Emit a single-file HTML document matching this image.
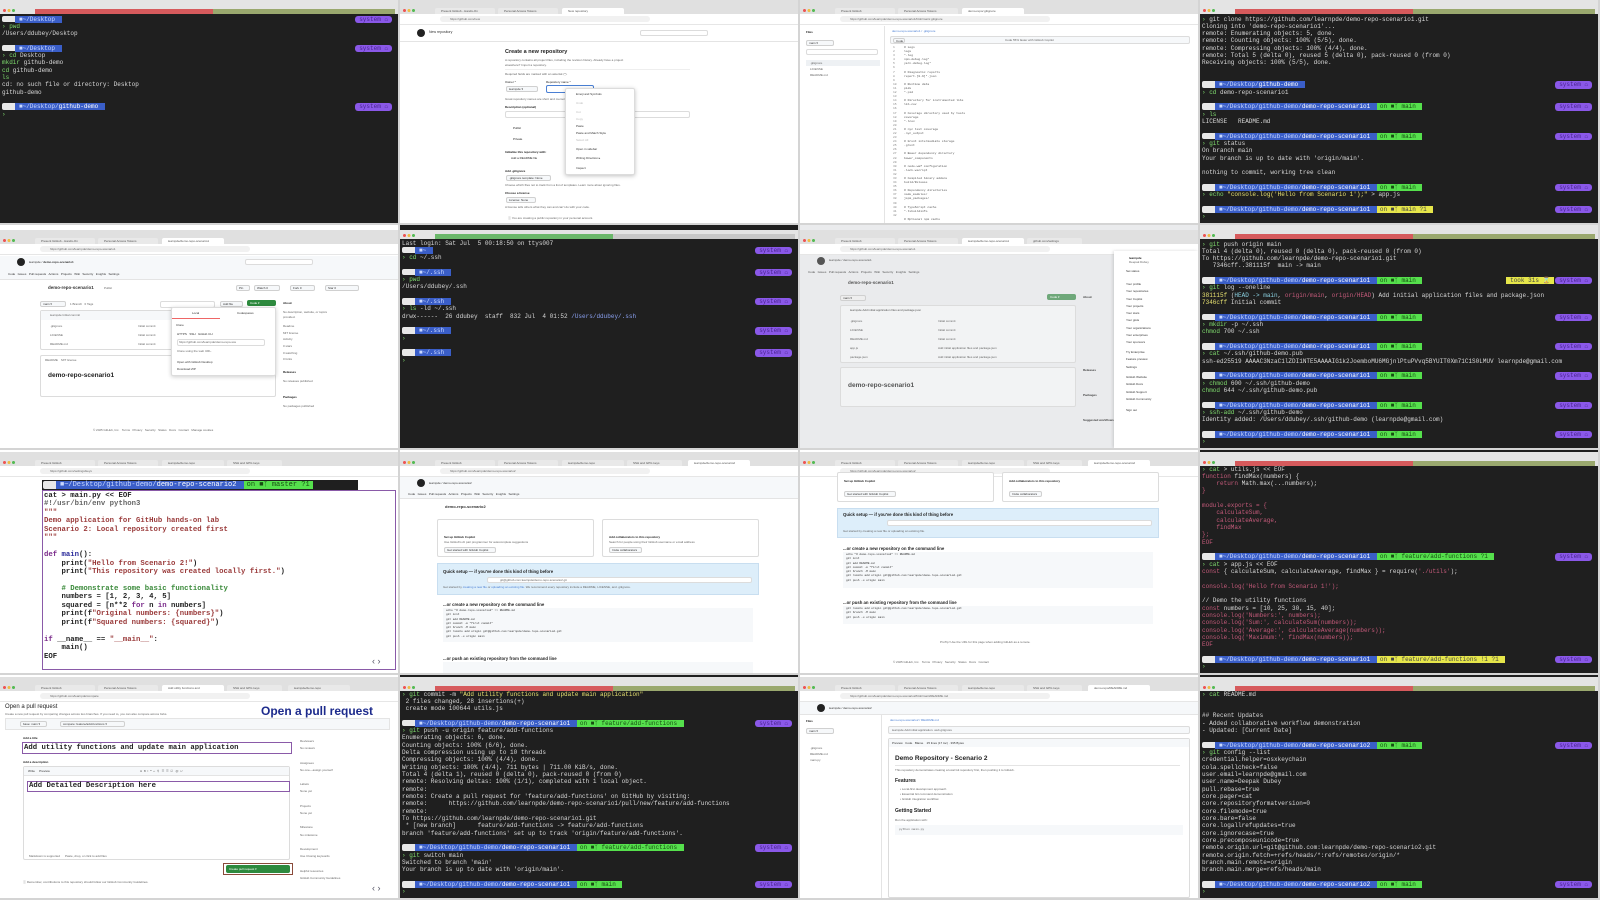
<!DOCTYPE html>
<html><head><meta charset="utf-8"><style>
*{margin:0;padding:0;box-sizing:border-box}
html,body{width:1600px;height:900px}
body{background:#d4d4d4;position:relative;overflow:hidden;font-family:"Liberation Sans",sans-serif}
.tile{position:absolute;width:398px;height:223px;overflow:hidden}
.term{background:#1f1f1f}
.tb{position:absolute;left:0;top:0;width:100%;height:14px;background:#e4e4e4}
.tb .r{position:absolute;left:35px;top:9px;width:178px;height:5px;background:#d65a5c}
.tb .g{position:absolute;left:213px;top:9px;width:182px;height:5px;background:#9aa86e}
.dots{position:absolute;left:3px;top:9px;width:12px;height:3px;background:radial-gradient(circle at 1.5px 1.5px,#e55 1.4px,transparent 1.6px),radial-gradient(circle at 6px 1.5px,#eb4 1.4px,transparent 1.6px),radial-gradient(circle at 10.5px 1.5px,#5b5 1.4px,transparent 1.6px)}
.tx{position:absolute;left:2px;top:15.5px;right:0;font:6px/7.33px "Liberation Mono",monospace;color:#d8d8d8}
.tx div{height:7.33px;position:relative;white-space:pre;overflow:visible}
.ap{display:inline-block;background:#e8e8e8;color:#111;width:13px;height:6.5px;vertical-align:top;border-radius:2px 0 0 2px}
.pb{background:#3a5ec8;color:#c9d8ff;padding:0 3px 0 4px}
.pb b{color:#fff;font-weight:normal}
.pg{background:#55e04c;color:#174d12;padding:0 3px}
.py{background:#e6e64a;color:#444;padding:0 3px}
.ps{position:absolute;right:6px;top:0;background:#8a58e8;color:#4a2590;padding:0 4px;border-radius:3px}
.tk{position:absolute;right:44px;top:0;background:#e6e64a;color:#444;padding:0 4px}
.gr{color:#7fdc6e}.rd{color:#c45a7a}.cy{color:#8ad0e0}.ylw{color:#e6e070}
.brow{background:#fff}
.bt{position:absolute;left:0;top:0;width:100%;height:14px;background:#e0e0e0}
.tab{position:absolute;top:8px;height:6px;background:#e9e9e9;border-radius:2px 2px 0 0;font-size:3px;line-height:6px;color:#555;padding-left:6px;overflow:hidden;white-space:nowrap}
.tab.a{background:#fff}
.ab{position:absolute;left:0;top:14px;width:100%;height:11px;background:#fff;border-bottom:1px solid #e6e6e6}
.url{position:absolute;left:40px;top:2px;width:210px;height:6px;background:#f1f1f1;border-radius:3px;font-size:3px;line-height:6px;padding-left:10px;color:#666;overflow:hidden;white-space:nowrap}
.s{position:absolute;font-size:3px;color:#666;white-space:nowrap;line-height:4px}
.m{position:absolute;white-space:nowrap}
.box{position:absolute;border:1px solid #dcdcdc;border-radius:2px;background:#fff}
.gh{position:absolute;width:8px;height:8px;border-radius:50%;background:#222}
.btn{position:absolute;height:6px;border:1px solid #d0d0d0;border-radius:2px;background:#f6f8fa;font-size:3px;line-height:5px;padding:0 2px;color:#333;white-space:nowrap;overflow:hidden}
.ln{position:absolute;height:1.5px;background:#c8c8c8}
</style></head><body>

<!-- R1C1 terminal -->
<div class="tile term" style="left:0;top:0"><div class="tb"><div class="dots"></div><div class="r"></div><div class="g"></div></div><div class="tx"><div><span class="ap"></span><span class="pb">&#9632;~/Desktop </span><span class="ps">system &#8962;</span></div><div><span class="gr">› pwd</span></div><div>/Users/ddubey/Desktop</div><div></div><div><span class="ap"></span><span class="pb">&#9632;~/Desktop </span><span class="ps">system &#8962;</span></div><div><span class="gr">› cd</span> Desktop</div><div><span class="gr">mkdir</span> github-demo</div><div><span class="gr">cd</span> github-demo</div><div><span class="gr">ls</span></div><div>cd: no such file or directory: Desktop</div><div>github-demo</div><div></div><div><span class="ap"></span><span class="pb">&#9632;~/Desktop/<b>github-demo</b> </span><span class="ps">system &#8962;</span></div><div><span class="gr">›</span></div></div></div>

<!-- R1C2 new repo -->
<div class="tile brow" style="left:400px;top:0">
<div class="bt"><div class="dots"></div><div class="tab" style="left:35px;width:60px">Present GitHub - Hands-On</div><div class="tab" style="left:98px;width:60px">Personal Access Tokens</div><div class="tab a" style="left:162px;width:62px">New repository</div></div>
<div class="ab"><div class="url">https://github.com/new</div></div>
<div style="position:absolute;left:0;top:26px;width:100%;height:16px;border-bottom:1px solid #e4e4e4"></div>
<div class="gh" style="left:17px;top:29px"></div><div class="m" style="left:29px;top:30px;font-size:3.5px;color:#333">New repository</div>
<div class="box" style="left:240px;top:30px;width:68px;height:6px"></div>
<div class="m" style="left:105px;top:49px;font-size:5.5px;font-weight:bold;color:#222">Create a new repository</div>
<div class="s" style="left:105px;top:58px">A repository contains all project files, including the revision history. Already have a project</div>
<div class="s" style="left:105px;top:63px">elsewhere? Import a repository.</div>
<div class="ln" style="left:105px;top:69px;width:185px;background:#eee;height:1px"></div>
<div class="s" style="left:105px;top:72px">Required fields are marked with an asterisk (*).</div>
<div class="s" style="left:105px;top:80px;color:#222">Owner *</div><div class="s" style="left:146px;top:80px;color:#222">Repository name *</div>
<div class="btn" style="left:106px;top:86px;width:32px">learnpde ▾</div><div class="box" style="left:146px;top:85px;width:48px;height:8px;border-color:#4a7fd4"></div>
<div class="s" style="left:105px;top:97px">Great repository names are short and memorable. Need inspiration? How about</div>
<div class="s" style="left:105px;top:105px;color:#222;font-weight:bold">Description (optional)</div>
<div class="box" style="left:105px;top:111px;width:185px;height:7px"></div>
<div class="s" style="left:113px;top:126px;color:#222">Public</div><div class="s" style="left:113px;top:137px;color:#222">Private</div>
<div class="s" style="left:105px;top:150px;color:#222;font-weight:bold">Initialize this repository with:</div>
<div class="s" style="left:111px;top:156px;color:#222">Add a README file</div>
<div class="s" style="left:105px;top:169px;color:#222;font-weight:bold">Add .gitignore</div>
<div class="btn" style="left:106px;top:175px;width:45px">.gitignore template: None</div>
<div class="s" style="left:105px;top:183px">Choose which files not to track from a list of templates. Learn more about ignoring files.</div>
<div class="s" style="left:105px;top:191px;color:#222;font-weight:bold">Choose a license</div>
<div class="btn" style="left:106px;top:197px;width:30px">License: None</div>
<div class="s" style="left:105px;top:205px">A license tells others what they can and can't do with your code.</div>
<div class="s" style="left:108px;top:216px">ⓘ You are creating a public repository in your personal account.</div>
<div class="box" style="left:165px;top:88px;width:70px;height:87px;box-shadow:0 1px 4px rgba(0,0,0,.25)">
<div class="s" style="left:10px;top:3px;color:#333">Emoji and Symbols</div>
<div class="s" style="left:10px;top:12px;color:#bbb">Undo</div><div class="s" style="left:10px;top:21px;color:#bbb">Cut</div><div class="s" style="left:10px;top:28px;color:#bbb">Copy</div>
<div class="s" style="left:10px;top:35px;color:#333">Paste</div><div class="s" style="left:10px;top:42px;color:#333">Paste and Match Style</div><div class="s" style="left:10px;top:49px;color:#bbb">Select All</div>
<div class="s" style="left:10px;top:58px;color:#333">Open in sidebar</div><div class="s" style="left:10px;top:67px;color:#333">Writing Direction ▸</div><div class="s" style="left:10px;top:77px;color:#333">Inspect</div></div>
</div>

<!-- R1C3 gitignore code -->
<div class="tile brow" style="left:800px;top:0">
<div class="bt"><div class="dots"></div><div class="tab" style="left:35px;width:60px">Present GitHub</div><div class="tab" style="left:98px;width:60px">Personal Access Tokens</div><div class="tab a" style="left:162px;width:62px">demo-repo/.gitignore</div></div>
<div class="ab"><div class="url">https://github.com/learnpde/demo-repo-scenario1/blob/main/.gitignore</div></div>
<div style="position:absolute;left:0;top:26px;width:85px;height:197px;border-right:1px solid #e4e4e4"></div>
<div class="s" style="left:6px;top:30px;color:#222;font-weight:bold">Files</div>
<div class="btn" style="left:6px;top:40px;width:28px">main ▾</div>
<div class="box" style="left:6px;top:49px;width:72px;height:6px"></div>
<div style="position:absolute;left:6px;top:60px;width:74px;height:6px;background:#eef1f4"></div>
<div class="s" style="left:10px;top:61px">.gitignore</div><div class="s" style="left:10px;top:67px">LICENSE</div><div class="s" style="left:10px;top:73px">README.md</div>
<div class="s" style="left:92px;top:29px;color:#4a7fd4">demo-repo-scenario1 / .gitignore</div>
<div class="box" style="left:90px;top:36px;width:300px;height:8px;background:#f6f8fa"></div>
<div class="btn" style="left:93px;top:38px;height:5px;width:12px">Code</div>
<div class="s" style="left:205px;top:38px">Code 55% faster with GitHub Copilot</div>
<div class="m" style="left:93px;top:46px;font:3px/4.1px 'Liberation Mono',monospace;color:#888">1<br>2<br>3<br>4<br>5<br>6<br>7<br>8<br>9<br>10<br>11<br>12<br>13<br>14<br>15<br>16<br>17<br>18<br>19<br>20<br>21<br>22<br>23<br>24<br>25<br>26<br>27<br>28<br>29<br>30<br>31<br>32<br>33<br>34<br>35<br>36<br>37<br>38<br>39<br>40<br>41<br>42</div>
<div class="m" style="left:104px;top:46px;font:3px/4.1px 'Liberation Mono',monospace;color:#555"># Logs<br>logs<br>*.log<br>npm-debug.log*<br>yarn-debug.log*<br><br># Diagnostic reports<br>report.[0-9]*.json<br><br># Runtime data<br>pids<br>*.pid<br><br># Directory for instrumented libs<br>lib-cov<br><br># Coverage directory used by tools<br>coverage<br>*.lcov<br><br># nyc test coverage<br>.nyc_output<br><br># Grunt intermediate storage<br>.grunt<br><br># Bower dependency directory<br>bower_components<br><br># node-waf configuration<br>.lock-wscript<br><br># Compiled binary addons<br>build/Release<br><br># Dependency directories<br>node_modules/<br>jspm_packages/<br><br># TypeScript cache<br>*.tsbuildinfo<br><br># Optional npm cache</div>
</div>

<!-- R1C4 terminal -->
<div class="tile term" style="left:1200px;top:0"><div class="tb"><div class="dots"></div><div class="r"></div><div class="g"></div></div><div class="tx"><div><span class="gr">›</span> git clone https://github.com/learnpde/demo-repo-scenario1.git</div><div>Cloning into 'demo-repo-scenario1'...</div><div>remote: Enumerating objects: 5, done.</div><div>remote: Counting objects: 100% (5/5), done.</div><div>remote: Compressing objects: 100% (4/4), done.</div><div>remote: Total 5 (delta 0), reused 5 (delta 0), pack-reused 0 (from 0)</div><div>Receiving objects: 100% (5/5), done.</div><div></div><div></div><div><span class="ap"></span><span class="pb">&#9632;~/Desktop/<b>github-demo</b> </span><span class="ps">system &#8962;</span></div><div><span class="gr">› cd</span> demo-repo-scenario1</div><div></div><div><span class="ap"></span><span class="pb">&#9632;~/Desktop/github-demo/<b>demo-repo-scenario1</b> </span><span class="pg">on &#9632;&#5833; main </span><span class="ps">system &#8962;</span></div><div><span class="gr">› ls</span></div><div>LICENSE   README.md</div><div></div><div><span class="ap"></span><span class="pb">&#9632;~/Desktop/github-demo/<b>demo-repo-scenario1</b> </span><span class="pg">on &#9632;&#5833; main </span><span class="ps">system &#8962;</span></div><div><span class="gr">› git</span> status</div><div>On branch main</div><div>Your branch is up to date with 'origin/main'.</div><div></div><div>nothing to commit, working tree clean</div><div></div><div><span class="ap"></span><span class="pb">&#9632;~/Desktop/github-demo/<b>demo-repo-scenario1</b> </span><span class="pg">on &#9632;&#5833; main </span><span class="ps">system &#8962;</span></div><div><span class="gr">› echo</span> <span class="ylw">"console.log('Hello from Scenario 1');"</span> &gt; app.js</div><div></div><div><span class="ap"></span><span class="pb">&#9632;~/Desktop/github-demo/<b>demo-repo-scenario1</b> </span><span class="py">on &#9632;&#5833; main ?1 </span><span class="ps">system &#8962;</span></div><div><span class="gr">›</span></div></div></div>

<!-- R2C1 repo page -->
<div class="tile brow" style="left:0;top:225px">
<div class="bt" style="top:5px;height:14px"><div class="dots"></div><div class="tab" style="left:35px;width:60px">Present GitHub - Hands-On</div><div class="tab" style="left:98px;width:60px">Personal Access Tokens</div><div class="tab a" style="left:162px;width:62px">learnpde/demo-repo-scenario1</div></div>
<div class="ab" style="top:19px"><div class="url">https://github.com/learnpde/demo-repo-scenario1</div></div>
<div style="position:absolute;left:0;top:31px;width:100%;height:24px;background:#f6f8fa;border-bottom:1px solid #e4e4e4"></div>
<div class="gh" style="left:17px;top:33px"></div><div class="s" style="left:29px;top:35px;color:#333">learnpde / <b>demo-repo-scenario1</b></div>
<div class="box" style="left:245px;top:34px;width:68px;height:6px"></div>
<div class="s" style="left:8px;top:47px;color:#333">Code &nbsp; Issues &nbsp; Pull requests &nbsp; Actions &nbsp; Projects &nbsp; Wiki &nbsp; Security &nbsp; Insights &nbsp; Settings</div>
<div class="m" style="left:48px;top:60px;font-size:4.5px;font-weight:bold;color:#333">demo-repo-scenario1</div><div class="s" style="left:104px;top:61px">Public</div>
<div class="btn" style="left:236px;top:60px;width:14px">Pin</div><div class="btn" style="left:254px;top:60px;width:26px">Watch 0</div><div class="btn" style="left:290px;top:60px;width:25px">Fork 0</div><div class="btn" style="left:325px;top:60px;width:34px">Star 0</div>
<div class="btn" style="left:40px;top:76px;width:26px">main ▾</div><div class="s" style="left:70px;top:77px">1 Branch &nbsp; 0 Tags</div>
<div class="box" style="left:160px;top:76px;width:55px;height:7px"></div><div class="btn" style="left:220px;top:76px;width:23px">Add file</div>
<div class="btn" style="left:247px;top:75px;width:29px;background:#2d8a3e;color:#fff;border-color:#2d8a3e">Code ▾</div>
<div class="box" style="left:40px;top:85px;width:236px;height:40px"></div>
<div style="position:absolute;left:41px;top:86px;width:234px;height:9px;background:#f6f8fa"></div>
<div class="s" style="left:50px;top:88px">learnpde Initial commit</div>
<div class="s" style="left:50px;top:99px">.gitignore</div><div class="s" style="left:138px;top:99px">Initial commit</div>
<div class="s" style="left:50px;top:108px">LICENSE</div><div class="s" style="left:138px;top:108px">Initial commit</div>
<div class="s" style="left:50px;top:117px">README.md</div><div class="s" style="left:138px;top:117px">Initial commit</div>
<div class="box" style="left:40px;top:130px;width:236px;height:42px"></div>
<div class="s" style="left:45px;top:133px">README &nbsp;&nbsp; MIT license</div>
<div class="m" style="left:48px;top:147px;font-size:6.5px;font-weight:bold;color:#222">demo-repo-scenario1</div>
<div class="box" style="left:171px;top:82px;width:105px;height:69px;box-shadow:0 1px 4px rgba(0,0,0,.2)">
<div class="s" style="left:20px;top:3px;color:#333">Local</div><div class="s" style="left:65px;top:3px;color:#333">Codespaces</div>
<div class="ln" style="left:0;top:10px;width:48px;height:1px;background:#e66"></div>
<div class="s" style="left:4px;top:15px;color:#333">Clone</div>
<div class="s" style="left:5px;top:24px;color:#333">HTTPS &nbsp; SSH &nbsp; GitHub CLI</div>
<div class="box" style="left:5px;top:31px;width:88px;height:7px"></div>
<div class="s" style="left:7px;top:32px">https://github.com/learnpde/demo-repo-sce</div>
<div class="s" style="left:5px;top:41px">Clone using the web URL.</div>
<div class="s" style="left:5px;top:52px;color:#333">Open with GitHub Desktop</div>
<div class="s" style="left:5px;top:59px;color:#333">Download ZIP</div></div>
<div class="s" style="left:283px;top:76px;color:#222;font-weight:bold">About</div>
<div class="s" style="left:283px;top:85px">No description, website, or topics</div><div class="s" style="left:283px;top:90px">provided.</div>
<div class="s" style="left:283px;top:99px">Readme</div><div class="s" style="left:283px;top:106px">MIT license</div><div class="s" style="left:283px;top:112px">Activity</div><div class="s" style="left:283px;top:119px">0 stars</div><div class="s" style="left:283px;top:126px">0 watching</div><div class="s" style="left:283px;top:132px">0 forks</div>
<div class="s" style="left:283px;top:145px;color:#222;font-weight:bold">Releases</div><div class="s" style="left:283px;top:154px">No releases published</div>
<div class="s" style="left:283px;top:170px;color:#222;font-weight:bold">Packages</div><div class="s" style="left:283px;top:179px">No packages published</div>
<div class="s" style="left:93px;top:203px">© 2025 GitHub, Inc. &nbsp; Terms &nbsp; Privacy &nbsp; Security &nbsp; Status &nbsp; Docs &nbsp; Contact &nbsp; Manage cookies</div>
</div>

<!-- R2C2 terminal -->
<div class="tile term" style="left:400px;top:225px"><div class="tb" style="top:5px;height:9px"><div class="dots" style="top:4px"></div><div class="r" style="background:#6bb86a;top:4px"></div><div class="g" style="background:#c8c8c8;top:4px"></div></div><div class="tx" style="top:14.5px"><div>Last login: Sat Jul  5 00:18:50 on ttys007</div><div><span class="ap"></span><span class="pb">&#9632;~ </span><span class="ps">system &#8962;</span></div><div><span class="gr">› cd</span> ~/.ssh</div><div></div><div><span class="ap"></span><span class="pb">&#9632;~/.ssh </span><span class="ps">system &#8962;</span></div><div><span class="gr">› pwd</span></div><div>/Users/ddubey/.ssh</div><div></div><div><span class="ap"></span><span class="pb">&#9632;~/.ssh </span><span class="ps">system &#8962;</span></div><div><span class="gr">› ls</span> -ld ~/.ssh</div><div>drwx------  26 ddubey  staff  832 Jul  4 01:52 <span style="color:#8aa0f0">/Users/ddubey/.ssh</span></div><div></div><div><span class="ap"></span><span class="pb">&#9632;~/.ssh </span><span class="ps">system &#8962;</span></div><div><span class="gr">›</span></div><div></div><div><span class="ap"></span><span class="pb">&#9632;~/.ssh </span><span class="ps">system &#8962;</span></div><div><span class="gr">›</span></div></div></div>

<!-- R2C3 repo page with menu -->
<div class="tile brow" style="left:800px;top:225px;background:#eaebed">
<div class="bt" style="top:5px"><div class="dots"></div><div class="tab" style="left:35px;width:60px">Present GitHub</div><div class="tab" style="left:98px;width:60px">Personal Access Tokens</div><div class="tab a" style="left:162px;width:62px">learnpde/demo-repo-scenario1</div><div class="tab" style="left:227px;width:55px">github.com/settings</div></div>
<div class="ab" style="top:19px"><div class="url">https://github.com/learnpde/demo-repo-scenario1</div></div>
<div class="gh" style="left:17px;top:32px;background:#555"></div><div class="s" style="left:29px;top:33px;color:#555">learnpde / demo-repo-scenario1</div>
<div class="s" style="left:8px;top:45px;color:#555">Code &nbsp; Issues &nbsp; Pull requests &nbsp; Actions &nbsp; Projects &nbsp; Wiki &nbsp; Security &nbsp; Insights &nbsp; Settings</div>
<div class="m" style="left:48px;top:55px;font-size:4.5px;font-weight:bold;color:#555">demo-repo-scenario1</div>
<div class="btn" style="left:40px;top:70px;width:26px;background:#eee">main ▾</div>
<div class="btn" style="left:247px;top:69px;width:29px;background:#6fa87a;color:#fff;border-color:#6fa87a">Code ▾</div>
<div class="box" style="left:40px;top:80px;width:236px;height:58px;background:#f2f3f4"></div>
<div class="s" style="left:50px;top:83px;color:#555">learnpde Add initial application files and package.json</div>
<div class="s" style="left:50px;top:94px">.gitignore</div><div class="s" style="left:138px;top:94px">Initial commit</div>
<div class="s" style="left:50px;top:103px">LICENSE</div><div class="s" style="left:138px;top:103px">Initial commit</div>
<div class="s" style="left:50px;top:112px">README.md</div><div class="s" style="left:138px;top:112px">Initial commit</div>
<div class="s" style="left:50px;top:121px">app.js</div><div class="s" style="left:138px;top:121px">Add initial application files and package.json</div>
<div class="s" style="left:50px;top:130px">package.json</div><div class="s" style="left:138px;top:130px">Add initial application files and package.json</div>
<div class="box" style="left:40px;top:142px;width:236px;height:40px;background:#f2f3f4"></div>
<div class="m" style="left:48px;top:157px;font-size:6.5px;font-weight:bold;color:#555">demo-repo-scenario1</div>
<div class="s" style="left:283px;top:70px;color:#444;font-weight:bold">About</div>
<div class="s" style="left:283px;top:143px;color:#444;font-weight:bold">Releases</div><div class="s" style="left:283px;top:168px;color:#444;font-weight:bold">Packages</div>
<div class="s" style="left:283px;top:193px;color:#444;font-weight:bold">Suggested workflows</div>
<div style="position:absolute;left:314px;top:26px;width:84px;height:197px;background:#fff;box-shadow:-1px 0 3px rgba(0,0,0,.15)">
<div class="s" style="left:15px;top:5px;color:#222;font-weight:bold">learnpde</div><div class="s" style="left:15px;top:9px">Deepak Dubey</div>
<div class="s" style="left:12px;top:18px;color:#333">Set status</div>
<div class="s" style="left:12px;top:30px;color:#333;line-height:7.3px">Your profile<br>Your repositories<br>Your Copilot<br>Your projects<br>Your stars<br>Your gists<br>Your organizations<br>Your enterprises<br>Your sponsors</div>
<div class="s" style="left:12px;top:98px;color:#333;line-height:7.3px">Try Enterprise<br>Feature preview<br>Settings</div>
<div class="s" style="left:12px;top:123px;color:#333;line-height:7.3px">GitHub Website<br>GitHub Docs<br>GitHub Support<br>GitHub Community</div>
<div class="s" style="left:12px;top:157px;color:#333">Sign out</div></div>
</div>

<!-- R2C4 terminal -->
<div class="tile term" style="left:1200px;top:225px"><div class="tb" style="top:0"><div class="dots"></div><div class="r"></div><div class="g"></div></div><div class="tx" style="top:15.5px"><div><span class="gr">› git</span> push origin main</div><div>Total 4 (delta 0), reused 0 (delta 0), pack-reused 0 (from 0)</div><div>To https://github.com/learnpde/demo-repo-scenario1.git</div><div>   7346cff..381115f  main -&gt; main</div><div></div><div><span class="ap"></span><span class="pb">&#9632;~/Desktop/github-demo/<b>demo-repo-scenario1</b> </span><span class="pg">on &#9632;&#5833; main </span><span class="tk">took 31s &#8987;</span><span class="ps">system &#8962;</span></div><div><span class="gr">› git</span> log --oneline</div><div><span class="ylw">381115f</span> (<span class="cy">HEAD -&gt; main</span>, <span class="rd">origin/main</span>, <span class="rd">origin/HEAD</span>) Add initial application files and package.json</div><div><span class="ylw">7346cff</span> Initial commit</div><div></div><div><span class="ap"></span><span class="pb">&#9632;~/Desktop/github-demo/<b>demo-repo-scenario1</b> </span><span class="pg">on &#9632;&#5833; main </span><span class="ps">system &#8962;</span></div><div><span class="gr">› mkdir</span> -p ~/.ssh</div><div><span class="gr">chmod</span> 700 ~/.ssh</div><div></div><div><span class="ap"></span><span class="pb">&#9632;~/Desktop/github-demo/<b>demo-repo-scenario1</b> </span><span class="pg">on &#9632;&#5833; main </span><span class="ps">system &#8962;</span></div><div><span class="gr">› cat</span> ~/.ssh/github-demo.pub</div><div>ssh-ed25519 AAAAC3NzaC1lZDI1NTE5AAAAIG1k2JoemboMU6MGjnlPtuPVvq5BYUIT0Xm71C1S0LMUV learnpde@gmail.com</div><div></div><div><span class="ap"></span><span class="pb">&#9632;~/Desktop/github-demo/<b>demo-repo-scenario1</b> </span><span class="pg">on &#9632;&#5833; main </span><span class="ps">system &#8962;</span></div><div><span class="gr">› chmod</span> 600 ~/.ssh/github-demo</div><div><span class="gr">chmod</span> 644 ~/.ssh/github-demo.pub</div><div></div><div><span class="ap"></span><span class="pb">&#9632;~/Desktop/github-demo/<b>demo-repo-scenario1</b> </span><span class="pg">on &#9632;&#5833; main </span><span class="ps">system &#8962;</span></div><div><span class="gr">› ssh-add</span> ~/.ssh/github-demo</div><div>Identity added: /Users/ddubey/.ssh/github-demo (learnpde@gmail.com)</div><div></div><div><span class="ap"></span><span class="pb">&#9632;~/Desktop/github-demo/<b>demo-repo-scenario1</b> </span><span class="pg">on &#9632;&#5833; main </span><span class="ps">system &#8962;</span></div><div><span class="gr">›</span></div></div></div>

<!-- R3C1 main.py overlay -->
<div class="tile brow" style="left:0;top:450px">
<div class="bt" style="top:2px"><div class="dots"></div><div class="tab" style="left:35px;width:60px">Present GitHub</div><div class="tab" style="left:98px;width:60px">Personal Access Tokens</div><div class="tab" style="left:162px;width:62px">learnpde/demo-repo</div><div class="tab" style="left:227px;width:55px">SSH and GPG keys</div></div>
<div class="ab" style="top:16px"><div class="url">https://github.com/settings/keys</div></div>
<div style="position:absolute;left:42px;top:30px;width:316px;height:10px;background:#1f1f1f"></div>
<div class="m" style="left:43px;top:31px;font:7px/8px 'Liberation Mono',monospace"><span class="ap" style="height:8px"></span><span class="pb">&#9632;~/Desktop/github-demo/<b>demo-repo-scenario2</b> </span><span class="pg">on &#9632;&#5833; master ?1 </span></div>
<div style="position:absolute;left:42px;top:40px;width:354px;height:180px;border:1.5px solid #8a5aa8;background:#fff"></div>
<div class="m" style="left:44px;top:42px;font:bold 7.3px/8.45px 'Liberation Mono',monospace;color:#222;white-space:pre">cat &gt; main.py &lt;&lt; EOF
<span style="color:#666">#!/usr/bin/env python3</span>
<span style="color:#9a3a3a">"""</span>
<span style="color:#9a3a3a">Demo application for GitHub hands-on lab</span>
<span style="color:#9a3a3a">Scenario 2: Local repository created first</span>
<span style="color:#9a3a3a">"""</span>

<span style="color:#7a2a8a">def</span> <span style="color:#2a2a9a">main</span>():
    print(<span style="color:#9a3a3a">"Hello from Scenario 2!"</span>)
    print(<span style="color:#9a3a3a">"This repository was created locally first."</span>)

    <span style="color:#3a8a3a"># Demonstrate some basic functionality</span>
    numbers = [1, 2, 3, 4, 5]
    squared = [n**2 <span style="color:#7a2a8a">for</span> n <span style="color:#7a2a8a">in</span> numbers]
    print(f<span style="color:#9a3a3a">"Original numbers: {numbers}"</span>)
    print(f<span style="color:#9a3a3a">"Squared numbers: {squared}"</span>)

<span style="color:#7a2a8a">if</span> __name__ == <span style="color:#9a3a3a">"__main__"</span>:
    main()
EOF</div>
<div class="m" style="left:372px;top:206px;font-size:9px;color:#556">‹ ›</div>
</div>

<!-- R3C2 quick setup -->
<div class="tile brow" style="left:400px;top:450px">
<div class="bt" style="top:2px"><div class="dots"></div><div class="tab" style="left:35px;width:60px">Present GitHub</div><div class="tab" style="left:98px;width:60px">Personal Access Tokens</div><div class="tab" style="left:162px;width:62px">learnpde/demo-repo</div><div class="tab" style="left:227px;width:55px">SSH and GPG keys</div><div class="tab a" style="left:288px;width:62px">learnpde/demo-repo-scenario2</div></div>
<div class="ab" style="top:16px"><div class="url">https://github.com/learnpde/demo-repo-scenario2</div></div>
<div style="position:absolute;left:0;top:27px;width:100%;height:22px;background:#f6f8fa;border-bottom:1px solid #e4e4e4"></div>
<div class="gh" style="left:17px;top:29px"></div><div class="s" style="left:29px;top:31px;color:#333">learnpde / demo-repo-scenario2</div>
<div class="s" style="left:8px;top:42px;color:#333">Code &nbsp; Issues &nbsp; Pull requests &nbsp; Actions &nbsp; Projects &nbsp; Wiki &nbsp; Security &nbsp; Insights &nbsp; Settings</div>
<div class="m" style="left:45px;top:54px;font-size:4px;font-weight:bold;color:#333">demo-repo-scenario2</div>
<div class="box" style="left:37px;top:69px;width:157px;height:38px"><div class="s" style="left:6px;top:15px;color:#222;font-weight:bold">Set up GitHub Copilot</div><div class="s" style="left:6px;top:20px">Use GitHub's AI pair programmer for autocomplete suggestions</div><div class="btn" style="left:6px;top:27px;width:52px">Get started with GitHub Copilot</div></div>
<div class="box" style="left:202px;top:69px;width:157px;height:38px"><div class="s" style="left:6px;top:15px;color:#222;font-weight:bold">Add collaborators to this repository</div><div class="s" style="left:6px;top:20px">Search for people using their GitHub username or email address</div><div class="btn" style="left:6px;top:27px;width:33px">Invite collaborators</div></div>
<div style="position:absolute;left:37px;top:113px;width:322px;height:32px;background:#ddeefa;border:1px solid #c8def0"></div>
<div class="m" style="left:43px;top:119px;font-size:4.3px;font-weight:bold;color:#222">Quick setup — if you've done this kind of thing before</div>
<div class="box" style="left:87px;top:127px;width:265px;height:6px"></div><div class="s" style="left:100px;top:128px">git@github.com:learnpde/demo-repo-scenario2.git</div>
<div class="s" style="left:43px;top:135px">Get started by <span style="color:#4a7fd4">creating a new file</span> or <span style="color:#4a7fd4">uploading an existing file</span>. We recommend every repository include a README, LICENSE, and .gitignore.</div>
<div class="m" style="left:43px;top:152px;font-size:4.3px;font-weight:bold;color:#222">...or create a new repository on the command line</div>
<div style="position:absolute;left:43px;top:158px;width:310px;height:34px;background:#f6f8fa"></div>
<div class="m" style="left:46px;top:159px;font:2.8px/4.3px 'Liberation Mono',monospace;color:#333">echo "# demo-repo-scenario2" &gt;&gt; README.md<br>git init<br>git add README.md<br>git commit -m "first commit"<br>git branch -M main<br>git remote add origin git@github.com:learnpde/demo-repo-scenario2.git<br>git push -u origin main</div>
<div class="m" style="left:43px;top:206px;font-size:4.3px;font-weight:bold;color:#222">...or push an existing repository from the command line</div>
<div style="position:absolute;left:43px;top:212px;width:310px;height:11px;background:#f6f8fa"></div>
</div>

<!-- R3C3 quick setup scrolled -->
<div class="tile brow" style="left:800px;top:450px">
<div class="bt" style="top:2px"><div class="dots"></div><div class="tab" style="left:35px;width:60px">Present GitHub</div><div class="tab" style="left:98px;width:60px">Personal Access Tokens</div><div class="tab" style="left:162px;width:62px">learnpde/demo-repo</div><div class="tab" style="left:227px;width:55px">SSH and GPG keys</div><div class="tab a" style="left:288px;width:62px">learnpde/demo-repo-scenario2</div></div>
<div class="ab" style="top:16px"><div class="url">https://github.com/learnpde/demo-repo-scenario2</div></div>
<div class="box" style="left:37px;top:22px;width:157px;height:30px"><div class="s" style="left:6px;top:6px;color:#222;font-weight:bold">Set up GitHub Copilot</div><div class="btn" style="left:6px;top:18px;width:52px">Get started with GitHub Copilot</div></div>
<div class="box" style="left:202px;top:22px;width:157px;height:30px"><div class="s" style="left:6px;top:6px;color:#222;font-weight:bold">Add collaborators to this repository</div><div class="btn" style="left:6px;top:18px;width:33px">Invite collaborators</div></div>
<div style="position:absolute;left:37px;top:58px;width:322px;height:30px;background:#ddeefa;border:1px solid #c8def0"></div>
<div class="m" style="left:43px;top:62px;font-size:4.3px;font-weight:bold;color:#222">Quick setup — if you've done this kind of thing before</div>
<div class="box" style="left:87px;top:70px;width:265px;height:6px"></div>
<div class="s" style="left:43px;top:79px">Get started by creating a new file or uploading an existing file.</div>
<div class="m" style="left:43px;top:96px;font-size:4.3px;font-weight:bold;color:#222">...or create a new repository on the command line</div>
<div style="position:absolute;left:43px;top:102px;width:310px;height:36px;background:#f6f8fa"></div>
<div class="m" style="left:46px;top:103px;font:2.8px/4.3px 'Liberation Mono',monospace;color:#333">echo "# demo-repo-scenario2" &gt;&gt; README.md<br>git init<br>git add README.md<br>git commit -m "first commit"<br>git branch -M main<br>git remote add origin git@github.com:learnpde/demo-repo-scenario2.git<br>git push -u origin main</div>
<div class="m" style="left:43px;top:150px;font-size:4.3px;font-weight:bold;color:#222">...or push an existing repository from the command line</div>
<div style="position:absolute;left:43px;top:156px;width:310px;height:18px;background:#f6f8fa"></div>
<div class="m" style="left:46px;top:157px;font:2.8px/4.3px 'Liberation Mono',monospace;color:#333">git remote add origin git@github.com:learnpde/demo-repo-scenario2.git<br>git branch -M main<br>git push -u origin main</div>
<div class="s" style="left:140px;top:190px">ProTip! Use the URL for this page when adding GitHub as a remote.</div>
<div class="s" style="left:93px;top:210px">© 2025 GitHub, Inc. &nbsp; Terms &nbsp; Privacy &nbsp; Security &nbsp; Status &nbsp; Docs &nbsp; Contact</div>
</div>

<!-- R3C4 terminal -->
<div class="tile term" style="left:1200px;top:450px"><div class="tb" style="top:2px"><div class="dots"></div><div class="r"></div><div class="g"></div></div><div class="tx" style="top:15.5px"><div><span class="gr">› cat</span> &gt; utils.js &lt;&lt; EOF</div><div><span class="rd">function</span> findMax(numbers) {</div><div>    <span class="rd">return</span> Math.max(...numbers);</div><div class="rd">}</div><div></div><div class="rd">module.exports = {</div><div class="rd">    calculateSum,</div><div class="rd">    calculateAverage,</div><div class="rd">    findMax</div><div class="rd">};</div><div class="rd">EOF</div><div></div><div><span class="ap"></span><span class="pb">&#9632;~/Desktop/github-demo/<b>demo-repo-scenario1</b> </span><span class="pg">on &#9632;&#5833; feature/add-functions ?1 </span><span class="ps">system &#8962;</span></div><div><span class="gr">› cat</span> &gt; app.js &lt;&lt; EOF</div><div><span class="rd">const</span> { calculateSum, calculateAverage, findMax } = require(<span class="rd">'./utils'</span>);</div><div></div><div class="rd">console.log('Hello from Scenario 1!');</div><div></div><div>// Demo the utility functions</div><div><span class="rd">const</span> numbers = [10, 25, 30, 15, 40];</div><div class="rd">console.log('Numbers:', numbers);</div><div class="rd">console.log('Sum:', calculateSum(numbers));</div><div class="rd">console.log('Average:', calculateAverage(numbers));</div><div class="rd">console.log('Maximum:', findMax(numbers));</div><div class="rd">EOF</div><div></div><div><span class="ap"></span><span class="pb">&#9632;~/Desktop/github-demo/<b>demo-repo-scenario1</b> </span><span class="py">on &#9632;&#5833; feature/add-functions !1 ?1 </span><span class="ps">system &#8962;</span></div><div><span class="gr">›</span></div></div></div>

<!-- R4C1 PR page -->
<div class="tile brow" style="left:0;top:675px">
<div class="bt" style="top:2px"><div class="dots"></div><div class="tab" style="left:35px;width:60px">Present GitHub</div><div class="tab" style="left:98px;width:60px">Personal Access Tokens</div><div class="tab a" style="left:162px;width:62px">Add utility functions and</div><div class="tab" style="left:227px;width:55px">SSH and GPG keys</div><div class="tab" style="left:288px;width:62px">learnpde/demo-repo</div></div>
<div class="ab" style="top:16px"><div class="url">https://github.com/learnpde/compare</div></div>
<div class="m" style="left:5px;top:29px;font-size:6px;color:#222">Open a pull request</div>
<div class="s" style="left:5px;top:37px">Create a new pull request by comparing changes across two branches. If you need to, you can also compare across forks.</div>
<div style="position:absolute;left:5px;top:43px;width:385px;height:12px;background:#f6f8fa;border:1px solid #e4e4e4"></div>
<div class="m" style="left:261px;top:29px;font-size:12px;line-height:14px;font-weight:bold;color:#1c2a8c">Open a pull request</div>
<div class="btn" style="left:20px;top:46px;width:27px">base: main ▾</div><div class="btn" style="left:60px;top:46px;width:65px">compare: feature/add-functions ▾</div>
<div class="s" style="left:23px;top:61px;color:#222;font-weight:bold">Add a title</div>
<div style="position:absolute;left:22px;top:67px;width:270px;height:12px;border:1.5px solid #8a5aa8"></div>
<div class="m" style="left:24px;top:68px;font:bold 7.3px/10px 'Liberation Mono',monospace;color:#222">Add utility functions and update main application</div>
<div class="s" style="left:23px;top:85px;color:#222;font-weight:bold">Add a description</div>
<div class="box" style="left:23px;top:91px;width:267px;height:94px"></div>
<div style="position:absolute;left:24px;top:92px;width:265px;height:9px;background:#f6f8fa;border-bottom:1px solid #e4e4e4"></div>
<div class="s" style="left:28px;top:94px;color:#333">Write &nbsp;&nbsp;&nbsp; Preview</div>
<div class="s" style="left:140px;top:94px;color:#666">H &nbsp;B &nbsp;I &nbsp;❝ &nbsp;‹› &nbsp;⚲ &nbsp;&nbsp;☰ &nbsp;☰ &nbsp;☑ &nbsp;&nbsp;@ &nbsp;↩</div>
<div style="position:absolute;left:27px;top:106px;width:263px;height:11px;border:1.5px solid #8a5aa8"></div>
<div class="m" style="left:29px;top:107px;font:bold 7.3px/9px 'Liberation Mono',monospace;color:#222">Add Detailed Description here</div>
<div class="s" style="left:29px;top:179px">Markdown is supported &nbsp;&nbsp;&nbsp;&nbsp; Paste, drop, or click to add files</div>
<div style="position:absolute;left:223px;top:188px;width:70px;height:12px;border:1px solid #8a4a3a"></div>
<div class="btn" style="left:226px;top:190px;width:64px;height:8px;background:#2d8a3e;color:#fff;border-color:#2d8a3e;line-height:7px">Create pull request ▾</div>
<div class="s" style="left:23px;top:205px">ⓘ Remember, contributions to this repository should follow our GitHub Community Guidelines.</div>
<div class="s" style="left:300px;top:63px;line-height:7.2px">Reviewers<br>No reviews<br><br>Assignees<br>No one—assign yourself<br><br>Labels<br>None yet<br><br>Projects<br>None yet<br><br>Milestone<br>No milestone<br><br>Development<br>Use Closing keywords<br><br>Helpful resources<br>GitHub Community Guidelines</div>
<div class="m" style="left:372px;top:208px;font-size:9px;color:#556">‹ ›</div>
</div>

<!-- R4C2 terminal -->
<div class="tile term" style="left:400px;top:675px"><div class="tb" style="top:2px"><div class="dots"></div><div class="r"></div><div class="g"></div></div><div class="tx" style="top:15.5px"><div><span class="gr">› git</span> commit -m <span class="ylw">"Add utility functions and update main application"</span></div><div> 2 files changed, 28 insertions(+)</div><div> create mode 100644 utils.js</div><div></div><div><span class="ap"></span><span class="pb">&#9632;~/Desktop/github-demo/<b>demo-repo-scenario1</b> </span><span class="pg">on &#9632;&#5833; feature/add-functions </span><span class="ps">system &#8962;</span></div><div><span class="gr">› git</span> push -u origin feature/add-functions</div><div>Enumerating objects: 6, done.</div><div>Counting objects: 100% (6/6), done.</div><div>Delta compression using up to 10 threads</div><div>Compressing objects: 100% (4/4), done.</div><div>Writing objects: 100% (4/4), 711 bytes | 711.00 KiB/s, done.</div><div>Total 4 (delta 1), reused 0 (delta 0), pack-reused 0 (from 0)</div><div>remote: Resolving deltas: 100% (1/1), completed with 1 local object.</div><div>remote:</div><div>remote: Create a pull request for 'feature/add-functions' on GitHub by visiting:</div><div>remote:      https://github.com/learnpde/demo-repo-scenario1/pull/new/feature/add-functions</div><div>remote:</div><div>To https://github.com/learnpde/demo-repo-scenario1.git</div><div> * [new branch]      feature/add-functions -&gt; feature/add-functions</div><div>branch 'feature/add-functions' set up to track 'origin/feature/add-functions'.</div><div></div><div><span class="ap"></span><span class="pb">&#9632;~/Desktop/github-demo/<b>demo-repo-scenario1</b> </span><span class="pg">on &#9632;&#5833; feature/add-functions </span><span class="ps">system &#8962;</span></div><div><span class="gr">› git</span> switch main</div><div>Switched to branch 'main'</div><div>Your branch is up to date with 'origin/main'.</div><div></div><div><span class="ap"></span><span class="pb">&#9632;~/Desktop/github-demo/<b>demo-repo-scenario1</b> </span><span class="pg">on &#9632;&#5833; main </span><span class="ps">system &#8962;</span></div><div><span class="gr">›</span></div></div></div>

<!-- R4C3 README view -->
<div class="tile brow" style="left:800px;top:675px">
<div class="bt" style="top:2px"><div class="dots"></div><div class="tab" style="left:35px;width:60px">Present GitHub</div><div class="tab" style="left:98px;width:60px">Personal Access Tokens</div><div class="tab" style="left:162px;width:62px">learnpde/demo-repo</div><div class="tab" style="left:227px;width:55px">SSH and GPG keys</div><div class="tab a" style="left:288px;width:62px">demo-repo/README.md</div></div>
<div class="ab" style="top:16px"><div class="url">https://github.com/learnpde/demo-repo-scenario2/blob/main/README.md</div></div>
<div style="position:absolute;left:0;top:27px;width:100%;height:13px;background:#f6f8fa;border-bottom:1px solid #e4e4e4"></div>
<div class="gh" style="left:17px;top:29px"></div><div class="s" style="left:29px;top:31px;color:#333">learnpde / demo-repo-scenario2</div>
<div style="position:absolute;left:0;top:40px;width:82px;height:183px;border-right:1px solid #e4e4e4"></div>
<div class="s" style="left:6px;top:44px;color:#222;font-weight:bold">Files</div>
<div class="btn" style="left:6px;top:53px;width:28px">main ▾</div>
<div class="s" style="left:10px;top:70px;line-height:6px">.gitignore<br>README.md<br>main.py</div>
<div class="s" style="left:90px;top:43px;color:#4a7fd4">demo-repo-scenario2 / README.md</div>
<div class="box" style="left:88px;top:51px;width:302px;height:8px;background:#f6f8fa"></div>
<div class="s" style="left:92px;top:53px">learnpde Add initial application. web.gitignore</div>
<div class="box" style="left:88px;top:63px;width:302px;height:160px"></div>
<div style="position:absolute;left:89px;top:64px;width:300px;height:8px;background:#f6f8fa"></div>
<div class="s" style="left:92px;top:66px;color:#333">Preview &nbsp; Code &nbsp; Blame &nbsp;&nbsp; 25 lines (17 loc) · 395 Bytes</div>
<div class="m" style="left:95px;top:80px;font-size:6.5px;font-weight:bold;color:#222">Demo Repository - Scenario 2</div>
<div class="ln" style="left:95px;top:90px;width:285px;height:1px;background:#e4e4e4"></div>
<div class="s" style="left:95px;top:93px">This repository demonstrates creating a local Git repository first, then pushing it to GitHub.</div>
<div class="m" style="left:95px;top:103px;font-size:5px;font-weight:bold;color:#222">Features</div>
<div class="s" style="left:100px;top:112px;line-height:5px">• Local-first development approach<br>• Essential Git command demonstration<br>• GitHub integration workflow</div>
<div class="m" style="left:95px;top:133px;font-size:5px;font-weight:bold;color:#222">Getting Started</div>
<div class="s" style="left:95px;top:143px">Run the application with:</div>
<div style="position:absolute;left:95px;top:150px;width:288px;height:10px;background:#f6f8fa"></div>
<div class="s" style="left:99px;top:153px;font-family:'Liberation Mono',monospace">python main.py</div>
</div>

<!-- R4C4 terminal -->
<div class="tile term" style="left:1200px;top:675px"><div class="tb" style="top:2px"><div class="dots"></div><div class="r"></div><div class="g"></div></div><div class="tx" style="top:15.5px"><div><span class="gr">› cat</span> README.md</div><div></div><div></div><div>## Recent Updates</div><div>- Added collaborative workflow demonstration</div><div>- Updated: [Current Date]</div><div></div><div><span class="ap"></span><span class="pb">&#9632;~/Desktop/github-demo/<b>demo-repo-scenario2</b> </span><span class="pg">on &#9632;&#5833; main </span><span class="ps">system &#8962;</span></div><div><span class="gr">› git</span> config --list</div><div>credential.helper=osxkeychain</div><div>cola.spellcheck=false</div><div>user.email=learnpde@gmail.com</div><div>user.name=Deepak Dubey</div><div>pull.rebase=true</div><div>core.pager=cat</div><div>core.repositoryformatversion=0</div><div>core.filemode=true</div><div>core.bare=false</div><div>core.logallrefupdates=true</div><div>core.ignorecase=true</div><div>core.precomposeunicode=true</div><div>remote.origin.url=git@github.com:learnpde/demo-repo-scenario2.git</div><div>remote.origin.fetch=+refs/heads/*:refs/remotes/origin/*</div><div>branch.main.remote=origin</div><div>branch.main.merge=refs/heads/main</div><div></div><div><span class="ap"></span><span class="pb">&#9632;~/Desktop/github-demo/<b>demo-repo-scenario2</b> </span><span class="pg">on &#9632;&#5833; main </span><span class="ps">system &#8962;</span></div><div><span class="gr">›</span></div></div></div>

</body></html>
